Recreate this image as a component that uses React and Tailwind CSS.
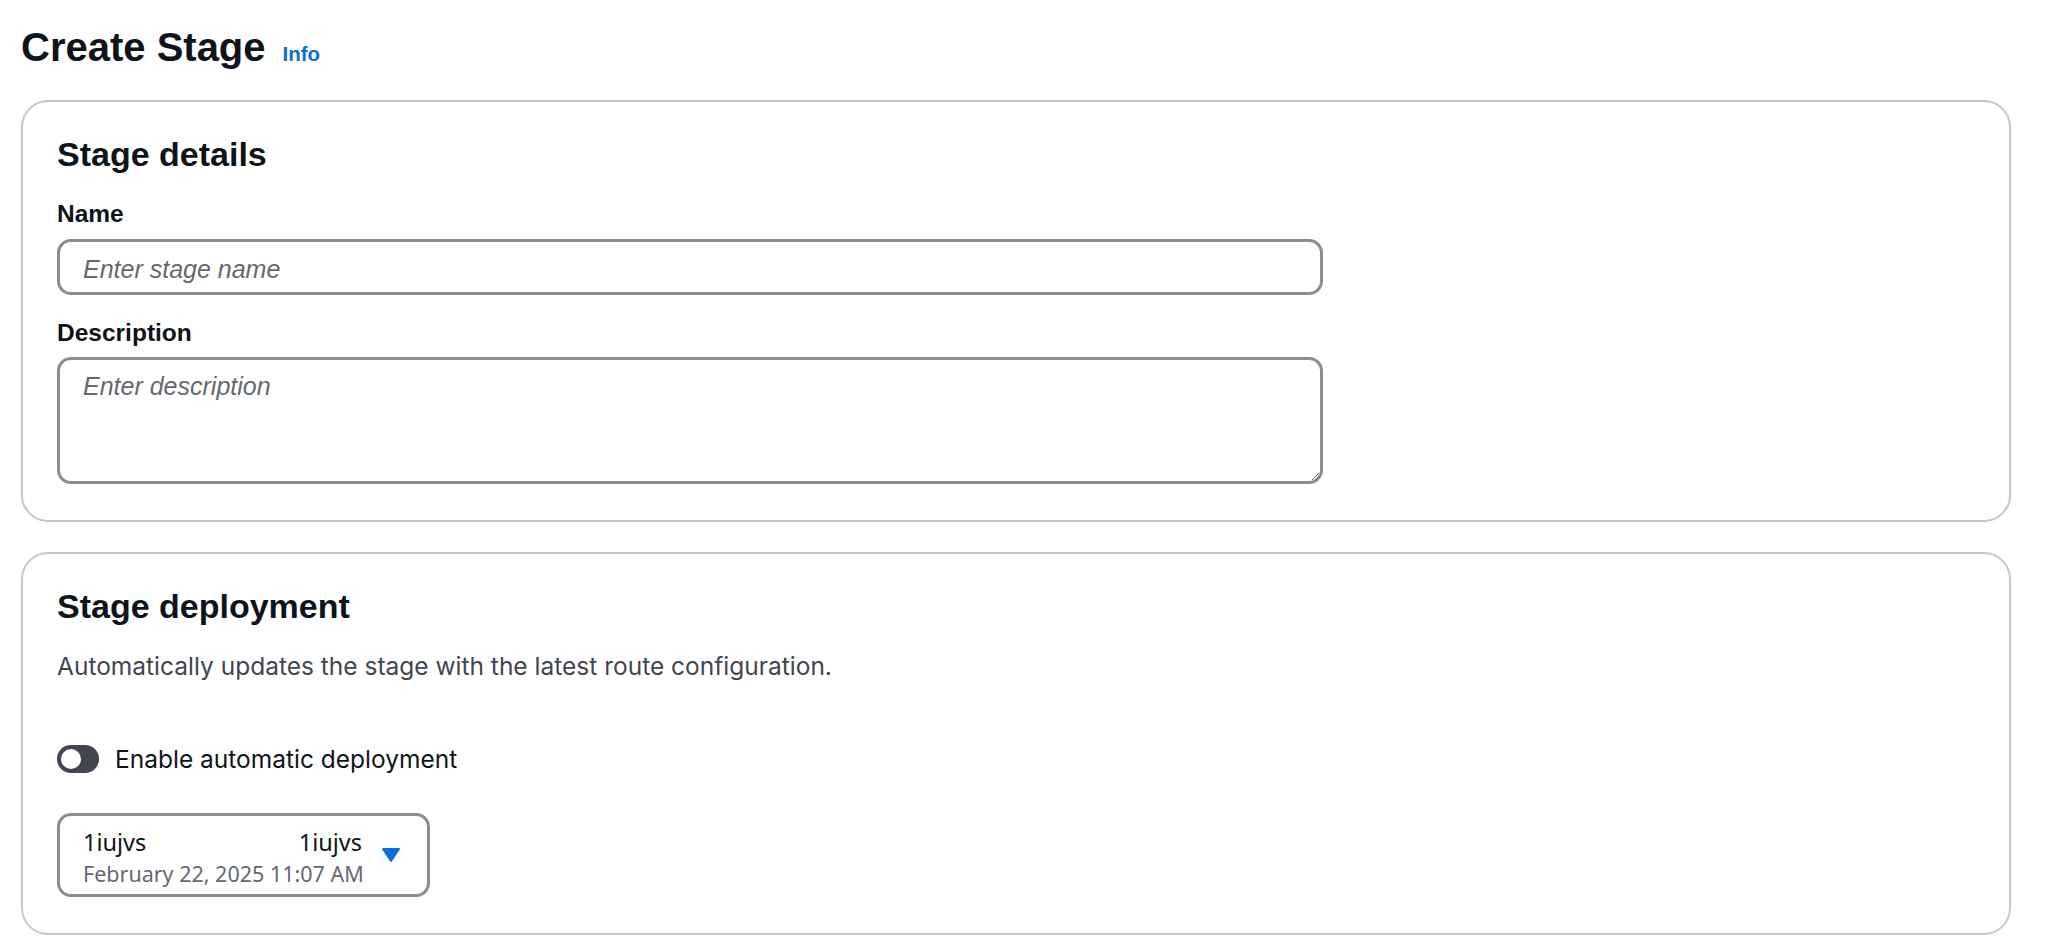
import React, { useState } from 'react'

function Toggle({ checked, onChange }) {
    return (
        <button
            type="button"
            onClick={() => onChange(!checked)}
            className={`flex items-center w-[42px] h-[28px] rounded-full px-[4px] ${checked ? 'bg-[#0972d3] justify-end' : 'bg-[#424650] justify-start'}`}
        >
            <span className="block w-[20px] h-[20px] rounded-full bg-white"></span>
        </button>
    )
}

function CaretDown() {
    return (
        <svg width="20" height="16" viewBox="0 0 20 16" className="shrink-0">
            <path d="M2 2 H18 L10 14 Z" fill="#0972d3" stroke="#0972d3" strokeWidth="2" strokeLinejoin="round" />
        </svg>
    )
}

export default function App() {
    const [autoDeploy, setAutoDeploy] = useState(false);

    return (
        <div className="min-h-screen bg-white pl-[21px] pr-[37px] pt-[22px] pb-[17px] font-['Liberation_Sans',Arial,sans-serif] text-[#0f141a]">
            <div className="flex items-baseline gap-[17px] h-[50px]">
                <h1 className="text-[40px] leading-[50px] font-bold">Create Stage</h1>
                <a href="#" className="text-[20.5px] leading-[50px] font-bold text-[#0972d3]">Info</a>
            </div>

            <div className="mt-[28px] border-2 border-[#c6c6cd] rounded-[27px] px-[34px] pt-[32px] pb-[36px]">
                <h2 className="text-[34px] leading-[40px] font-bold">Stage details</h2>

                <label className="block mt-[25px] text-[24.5px] leading-[30px] font-bold">Name</label>
                <input
                    type="text"
                    placeholder="Enter stage name"
                    className="block mt-[10px] w-[1266px] h-[56px] border-[3px] border-[#8c8c94] rounded-[14px] px-[23px] pt-[4px] text-[25px] leading-[30px] outline-none placeholder:italic placeholder:text-[#656871]"
                />

                <label className="block mt-[23px] text-[24.5px] leading-[30px] font-bold">Description</label>
                <textarea
                    placeholder="Enter description"
                    className="block mt-[9px] w-[1266px] h-[127px] border-[3px] border-[#8c8c94] rounded-[14px] px-[23px] pt-[11px] text-[25px] leading-[30px] outline-none placeholder:italic placeholder:text-[#656871]"
                ></textarea>
            </div>

            <div className="mt-[30px] border-2 border-[#c6c6cd] rounded-[27px] px-[34px] pt-[32px] pb-[36px]">
                <h2 className="text-[34px] leading-[40px] font-bold">Stage deployment</h2>
                <p className="mt-[25px] text-[24.5px] leading-[30px] text-[#424650] font-['Inter',sans-serif]">
                    Automatically updates the stage with the latest route configuration.
                </p>

                <div className="flex items-center gap-[16px] mt-[63px]">
                    <Toggle checked={autoDeploy} onChange={setAutoDeploy} />
                    <span className="text-[24.5px] leading-[30px] font-['Inter',sans-serif]">Enable automatic deployment</span>
                </div>

                <div className="mt-[39px] flex items-center w-[373px] h-[84px] border-[3px] border-[#8c8c94] rounded-[14px] pl-[23px] pr-[26px] font-['Noto_Sans',sans-serif]">
                    <div className="flex flex-col w-[279px] pt-[6px]">
                        <div className="flex justify-between text-[23.5px] leading-[32px] text-[#0f141a]">
                            <span>1iujvs</span>
                            <span>1iujvs</span>
                        </div>
                        <span className="text-[21.5px] leading-[32px] text-[#656871] whitespace-nowrap">February 22, 2025 11:07 AM</span>
                    </div>
                    <div className="ml-auto">
                        <CaretDown />
                    </div>
                </div>
            </div>
        </div>
    )
}
